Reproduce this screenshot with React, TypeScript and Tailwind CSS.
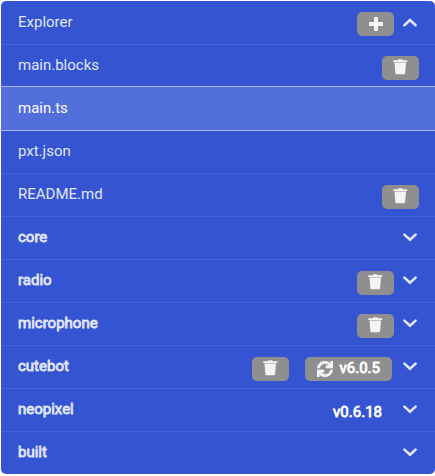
import { FaSync } from 'react-icons/fa';

type Row = {
  name: string;
  kind: 'file' | 'package';
  selected?: boolean;
  removable?: boolean;
  version?: string;
  updatable?: boolean;
};

const rows: Row[] = [
  { name: 'main.blocks', kind: 'file', removable: true },
  { name: 'main.ts', kind: 'file', selected: true },
  { name: 'pxt.json', kind: 'file' },
  { name: 'README.md', kind: 'file', removable: true },
  { name: 'core', kind: 'package' },
  { name: 'radio', kind: 'package', removable: true },
  { name: 'microphone', kind: 'package', removable: true },
  { name: 'cutebot', kind: 'package', removable: true, version: 'v6.0.5', updatable: true },
  { name: 'neopixel', kind: 'package', version: 'v0.6.18' },
  { name: 'built', kind: 'package' },
];

const actionClass =
  'flex h-6 items-center justify-center rounded-[5px] bg-[#8f8f8f] text-[#f4f4f4]';
const boldClass = '[-webkit-text-stroke:0.8px_currentColor]';

function Chevron({ up = false }: { up?: boolean }) {
  return (
    <svg viewBox="0 0 18 20" className="h-5 w-[18px]" fill="none" aria-hidden="true">
      <path
        d={up ? 'M3.4 13.2 9 8l5.6 5.200' : 'M3.4 7.6 9 12.800l5.600-5.200'}
        stroke="currentColor"
        strokeWidth="2.6"
        strokeLinecap="round"
      />
    </svg>
  );
}

function PlusIcon() {
  return (
    <svg viewBox="0 0 14 14" className="size-3.5" fill="currentColor" aria-hidden="true">
      <path d="M5.6 0h2.8q.6 0 .6.6V5h4.4q.6 0 .6.6v2.8q0 .6-.6.6H9v4.4q0 .6-.6.6H5.6q-.6 0-.6-.6V9H.6Q0 9 0 8.400V5.600Q0 5 .6 5H5V.6Q5 0 5.600 0z" />
    </svg>
  );
}

function TrashIcon() {
  return (
    <svg viewBox="0 0 15 16" className="h-4 w-[15px]" fill="currentColor" aria-hidden="true">
      <path d="M.6 1.200h4.200L5.400.5Q5.600.2 6 .2h2.500q.4 0 .6.3l.6.7h4.200q.4 0 .4.4v.9q0 .4-.4.4H.6q-.4 0-.4-.4v-.9q0-.4.4-.4z" />
      <path opacity=".5" d="M1.500 2.900h11.500v1H1.500z" />
      <path d="M1.500 3.900h11.500l-.9 10.300q-.1 1-1.100 1H3.500q-1 0-1.100-1z" />
    </svg>
  );
}

function RemoveButton({ name }: { name: string }) {
  return (
    <button type="button" aria-label={`Delete ${name}`} className={`${actionClass} w-[37px] pb-0.5`}>
      <TrashIcon />
    </button>
  );
}

function ExplorerRow({ row }: { row: Row }) {
  const isPackage = row.kind === 'package';
  const frame = row.selected
    ? 'relative -mt-0.5 h-[45px] border-y border-[#a9b7ec] bg-[#526eda] pt-[11px] text-white'
    : 'h-[43px] border-b border-[#4563d6] pt-2.5 text-[#e1e6f8] last:h-[42px] last:border-b-0';
  return (
    <li className={`flex items-start pr-4 pl-[17px] ${frame}`}>
      <button
        type="button"
        className={`flex-1 text-left leading-5 ${isPackage ? boldClass : ''}`}
      >
        {row.name}
      </button>
      <div className="flex items-start gap-[7px]">
        <div className="mt-px flex gap-4">
          {row.removable && <RemoveButton name={row.name} />}
          {row.updatable && (
            <button type="button" className={`${actionClass} mr-0.5 gap-[7px] px-3 pb-px`}>
              <FaSync size={16} stroke="currentColor" strokeWidth={24} />
              <span className={`text-white ${boldClass}`}>{row.version}</span>
            </button>
          )}
          {row.version && !row.updatable && (
            <span className={`mr-0.5 px-2.5 leading-6 text-white ${boldClass}`}>{row.version}</span>
          )}
        </div>
        {isPackage && (
          <button type="button" aria-label={`Expand ${row.name}`}>
            <Chevron />
          </button>
        )}
      </div>
    </li>
  );
}

export default function App() {
  return (
    <div className="bg-white pt-px pb-0.5 pl-px font-['Roboto',sans-serif] text-[15px]">
      <section className="overflow-hidden rounded-[5px] bg-[#3454d1]">
        <header className="flex h-11 items-start border-b border-[#4563d6] pt-[11px] pr-4 pl-[17px] text-[#e1e6f8]">
          <h2 className="flex-1 leading-5">Explorer</h2>
          <div className="flex items-start gap-[7px]">
            <button type="button" aria-label="Add file" className={`${actionClass} w-[37px]`}>
              <PlusIcon />
            </button>
            <button type="button" aria-label="Collapse explorer">
              <Chevron up />
            </button>
          </div>
        </header>
        <ul>
          {rows.map((row) => (
            <ExplorerRow key={row.name} row={row} />
          ))}
        </ul>
      </section>
    </div>
  );
}
